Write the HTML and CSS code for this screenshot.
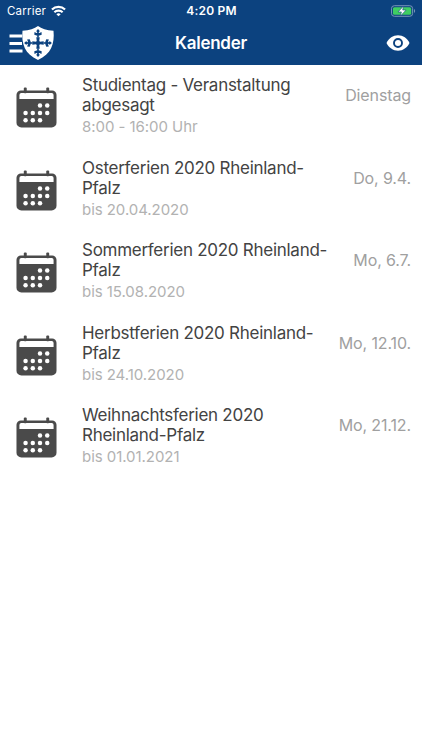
FILE: index.html
```html
<!DOCTYPE html>
<html lang="de">
<head>
  <meta charset="utf-8">
  <meta name="viewport" content="width=device-width, initial-scale=1">
  <title>Kalender</title>
  <link rel="stylesheet" href="styles.css">
</head>
<body>
  <svg class="symbols" aria-hidden="true">
    <symbol id="calendar" viewBox="0 0 42 42">
      <rect x="8" y=".5" width="3" height="6" rx="1"/>
      <rect x="31" y=".5" width="3" height="6" rx="1"/>
      <path fill-rule="evenodd" d="M5 3.500h32a4.500 4.500 0 0 1 4.500 4.500v28.500a5 5 0 0 1-5 5h-31a5 5 0 0 1-5-5V8A4.500 4.500 0 0 1 5 3.500zM5.500 6.200a2 2 0 0 0-2 2v4.100h35V8.200a2 2 0 0 0-2-2z"/>
      <g fill="#fff">
        <circle cx="24.600" cy="19" r="2.300"/><circle cx="32" cy="19" r="2.300"/>
        <circle cx="9.800" cy="26.600" r="2.300"/><circle cx="17.200" cy="26.600" r="2.300"/><circle cx="24.600" cy="26.600" r="2.300"/><circle cx="32" cy="26.600" r="2.300"/>
        <circle cx="9.800" cy="34" r="2.300"/><circle cx="17.200" cy="34" r="2.300"/><circle cx="24.600" cy="34" r="2.300"/>
      </g>
    </symbol>
  </svg>

  <header class="header">
    <div class="status-bar">
      <div class="carrier">
        <span class="carrier-name">Carrier</span>
        <svg class="wifi" viewBox="0 0 16 12">
          <g fill="none" stroke="#fff" stroke-width="2.300">
            <path d="M1 4.500a9.900 9.900 0 0 1 14 0"/>
            <path d="M3.600 7.400a6.200 6.200 0 0 1 8.800 0"/>
          </g>
          <path fill="#fff" d="M8 11.700L5.700 9.400a3.300 3.300 0 0 1 4.600 0z"/>
        </svg>
      </div>
      <div class="time">4:20 PM</div>
      <svg class="battery" viewBox="0 0 26 12">
        <rect x=".5" y=".5" width="22" height="11" rx="3" fill="none" stroke="#7d9abb"/>
        <rect x="2" y="2" width="19" height="8" rx="1.600" fill="#3fce62"/>
        <path d="M24 4v4c1.500-.6 1.500-3.400 0-4z" fill="#7d9abb"/>
        <path d="M13 .8L7.300 7h3.500l-1 4.200L15.700 5h-3.500z" fill="#fff" stroke="#15457f" stroke-width=".6"/>
      </svg>
    </div>

    <div class="nav-bar">
      <svg class="logo" viewBox="0 0 46 36">
        <path fill="#fff" d="M.5 9.500h12.500v3H.5zM.5 17h12.500v3H.5zM.5 24.500h13v3H.5z"/>
        <path fill="#fff" d="M29 1c3.500 2.600 8.500 4.500 15.500 4.800 1.300 13-2.500 23.600-15.500 29.200C16 29.400 12.200 18.800 13.500 5.800 20.500 5.500 25.500 3.600 29 1z"/>
        <g fill="#0c427f">
          <g id="arm">
            <path d="M28 18l-.7-5.700h3.400L30 18z"/>
            <path d="M28.200 12.400V8.800h1.600v3.600z"/>
            <path d="M29 4.100l1.700 2-1.100 2h-1.200l-1.100-2z"/>
            <path d="M25.500 7.100l2 .8h3l2-.8.200 2.600-2.200.9h-3l-2.200-.9z"/>
          </g>
          <use href="#arm" transform="rotate(90 29 18)"/>
          <use href="#arm" transform="rotate(180 29 18)"/>
          <use href="#arm" transform="rotate(270 29 18)"/>
          <circle cx="29" cy="18" r="2.200"/>
        </g>
      </svg>
      <h1 class="page-title">Kalender</h1>
      <svg class="eye" viewBox="0 0 24 16">
        <path fill="#fff" d="M12 .3c5 0 9.200 3 11.500 7.700C21.200 12.700 17 15.700 12 15.700S2.800 12.700.5 8C2.800 3.300 7 .3 12 .3z"/>
        <circle cx="12" cy="8" r="4" fill="none" stroke="#0c427f" stroke-width="1.900"/>
      </svg>
    </div>
  </header>

  <main class="events">
    <div class="event">
      <svg class="event-icon"><use href="#calendar"/></svg>
      <div class="event-text">
        <div class="event-title">Studientag - Veranstaltung<br>abgesagt</div>
        <div class="event-info">8:00 - 16:00 Uhr</div>
      </div>
      <div class="event-date">Dienstag</div>
    </div>
    <div class="event">
      <svg class="event-icon"><use href="#calendar"/></svg>
      <div class="event-text">
        <div class="event-title">Osterferien 2020 Rheinland-<br>Pfalz</div>
        <div class="event-info">bis 20.04.2020</div>
      </div>
      <div class="event-date">Do, 9.4.</div>
    </div>
    <div class="event">
      <svg class="event-icon"><use href="#calendar"/></svg>
      <div class="event-text">
        <div class="event-title">Sommerferien 2020 Rheinland-<br>Pfalz</div>
        <div class="event-info">bis 15.08.2020</div>
      </div>
      <div class="event-date">Mo, 6.7.</div>
    </div>
    <div class="event">
      <svg class="event-icon"><use href="#calendar"/></svg>
      <div class="event-text">
        <div class="event-title">Herbstferien 2020 Rheinland-<br>Pfalz</div>
        <div class="event-info">bis 24.10.2020</div>
      </div>
      <div class="event-date">Mo, 12.10.</div>
    </div>
    <div class="event">
      <svg class="event-icon"><use href="#calendar"/></svg>
      <div class="event-text">
        <div class="event-title">Weihnachtsferien 2020<br>Rheinland-Pfalz</div>
        <div class="event-info">bis 01.01.2021</div>
      </div>
      <div class="event-date">Mo, 21.12.</div>
    </div>
  </main>
</body>
</html>
```
FILE: styles.css
```css
* {
  box-sizing: border-box;
}

body {
  margin: 0;
  background-color: #fff;
  font-family: Inter, "Liberation Sans", sans-serif;
}

.symbols {
  display: none;
}

.header {
  height: 65px;
  background-color: #0c427f;
  color: #fff;
}

.status-bar {
  display: grid;
  grid-template-columns: 1fr auto 1fr;
  align-items: center;
  height: 21px;
  padding: 0 6px 0 7px;
}

.carrier {
  display: flex;
  align-items: center;
  gap: 5px;
  font-size: 11.5px;
  letter-spacing: 0.2px;
}

.wifi {
  width: 15px;
  height: 12px;
}

.time {
  font-size: 12px;
  font-weight: 600;
  letter-spacing: 0.2px;
}

.battery {
  justify-self: end;
  width: 25px;
  height: 12px;
}

.nav-bar {
  display: grid;
  grid-template-columns: 1fr auto 1fr;
  align-items: center;
  height: 43px;
  padding: 0 12px 0 9px;
}

.logo {
  width: 46px;
  height: 36px;
}

.page-title {
  margin: 0;
  padding-left: 3px;
  font-size: 17px;
  font-weight: 600;
  line-height: 22px;
  letter-spacing: -0.25px;
}

.eye {
  justify-self: end;
  width: 24px;
  height: 16px;
}

.event {
  display: flex;
  height: 82.5px;
  padding: 10px 11px 0 16px;
}

.event-icon {
  flex: none;
  width: 41px;
  height: 41px;
  margin: 12px 25px 0 0;
  fill: #4a4a4a;
}

.event-text {
  flex: 1;
  white-space: nowrap;
}

.event-title {
  color: #434343;
  font-size: 17px;
  line-height: 20.4px;
  letter-spacing: -0.27px;
}

.event-info {
  margin-top: 1.5px;
  color: #b2b2b2;
  font-size: 15px;
  line-height: 20px;
  letter-spacing: -0.05px;
}

.event-date {
  margin-top: 9px;
  color: #a0a0a0;
  font-size: 16px;
  line-height: 22px;
  letter-spacing: -0.12px;
}
```
